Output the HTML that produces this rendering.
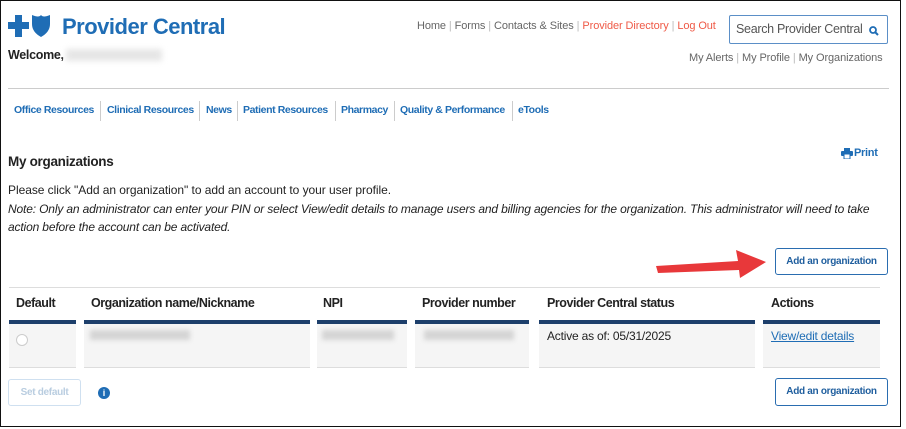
<!DOCTYPE html>
<html><head><meta charset="utf-8"><style>
*{margin:0;padding:0;box-sizing:border-box}
body{width:906px;height:429px;background:#fff;font-family:"Liberation Sans",sans-serif;position:relative;overflow:hidden;color:#222}
.frame{position:absolute;left:0;top:0;width:901px;height:427px;border:1.5px solid #111}
.a{position:absolute;white-space:nowrap}
.n{color:#1f6db5;font-weight:bold;font-size:10.5px;letter-spacing:-0.4px}
.sep{position:absolute;width:1px;background:#ccc}
.gt{color:#666;font-size:11px;letter-spacing:-0.1px}
.th{font-weight:bold;font-size:12.5px;letter-spacing:-0.45px;color:#222}
.btn{position:absolute;border:1px solid #2a6db0;border-radius:3px;color:#1f5e9e;font-weight:bold;font-size:10px;text-align:center;letter-spacing:-0.3px;background:#fff}
.blur{position:absolute;height:10px;background:#d4d4d4;filter:blur(2.5px)}
</style></head><body>
<div class="frame"></div>
<svg class="a" style="left:8px;top:14px" width="44" height="24" viewBox="0 0 44 24">
<path d="M7 1h7v7h7v7h-7v8H7v-8H0V8h7z" fill="#1f6db5"/>
<path d="M24 1q7 3 9 0q2 3 9 0v9q0 8-9 13q-9-5-9-13z" fill="#1f6db5"/>
</svg>
<div class="a" style="left:62px;top:14px;font-size:22px;font-weight:bold;color:#1f6db5;letter-spacing:-0.5px">Provider Central</div>
<div class="a" style="left:8px;top:48px;font-size:12.5px;font-weight:bold;letter-spacing:-0.3px">Welcome,</div>
<div class="a" style="left:66px;top:49px;width:96px;height:12px;background:#e6e6e6;filter:blur(3px)"></div>
<div class="a gt" style="left:417px;top:20px">Home <span style="color:#bbb">|</span> Forms <span style="color:#bbb">|</span> Contacts &amp; Sites <span style="color:#bbb">|</span> <span style="color:#ef5a47">Provider Directory</span> <span style="color:#bbb">|</span> <span style="color:#ef5a47">Log Out</span></div>
<div class="a" style="left:729px;top:15px;width:159px;height:29px;border:1px solid #5b8fc7;border-radius:2px"></div>
<div class="a" style="left:736px;top:22px;font-size:12.5px;color:#555;letter-spacing:-0.3px">Search Provider Central</div>
<svg class="a" style="left:869px;top:26px" width="10" height="10" viewBox="0 0 10 10"><circle cx="4" cy="4" r="3" fill="none" stroke="#1f6db5" stroke-width="1.8"/><path d="M6 6l3 3" stroke="#1f6db5" stroke-width="2"/></svg>
<div class="a gt" style="left:689px;top:52px">My Alerts <span style="color:#bbb">|</span> My Profile <span style="color:#bbb">|</span> My Organizations</div>
<div class="a" style="left:8px;top:88px;width:881px;height:1px;background:#ccc"></div>
<div class="a n" style="left:14px;top:104px">Office Resources</div>
<div class="sep" style="left:100px;top:101px;height:20px"></div>
<div class="a n" style="left:107px;top:104px">Clinical Resources</div>
<div class="sep" style="left:199px;top:101px;height:20px"></div>
<div class="a n" style="left:206px;top:104px">News</div>
<div class="sep" style="left:237px;top:101px;height:20px"></div>
<div class="a n" style="left:243px;top:104px">Patient Resources</div>
<div class="sep" style="left:335px;top:101px;height:20px"></div>
<div class="a n" style="left:341px;top:104px">Pharmacy</div>
<div class="sep" style="left:394px;top:101px;height:20px"></div>
<div class="a n" style="left:400px;top:104px">Quality &amp; Performance</div>
<div class="sep" style="left:512px;top:101px;height:20px"></div>
<div class="a n" style="left:518px;top:104px">eTools</div>
<div class="a" style="left:8px;top:154px;font-size:13.5px;font-weight:bold;letter-spacing:-0.3px">My organizations</div>
<svg class="a" style="left:841px;top:148px" width="12" height="11" viewBox="0 0 12 11"><rect x="3" y="0" width="6" height="3" fill="#1f6db5"/><rect x="0" y="3" width="12" height="5" rx="1" fill="#1f6db5"/><rect x="3" y="6" width="6" height="5" fill="#fff" stroke="#1f6db5" stroke-width="1"/></svg>
<div class="a" style="left:854px;top:147px;font-size:11px;font-weight:bold;color:#1f6db5;letter-spacing:-0.3px">Print</div>
<div class="a" style="left:8px;top:183px;font-size:12px;letter-spacing:-0.05px">Please click "Add an organization" to add an account to your user profile.</div>
<div class="a" style="left:8px;top:202px;font-size:12px;font-style:italic;letter-spacing:-0.15px">Note: Only an administrator can enter your PIN or select View/edit details to manage users and billing agencies for the organization. This administrator will need to take</div>
<div class="a" style="left:8px;top:220px;font-size:12px;font-style:italic;letter-spacing:-0.15px">action before the account can be activated.</div>
<svg class="a" style="left:652px;top:248px" width="118" height="34" viewBox="0 0 118 34"><path d="M4 18L86 13L84 2L114 14L88 30L87 22L6 25z" fill="#e8383a"/></svg>
<div class="btn" style="left:775px;top:248px;width:113px;height:27px;line-height:25px">Add an organization</div>
<div class="a" style="left:9px;top:287px;width:871px;height:1px;background:#ddd"></div>
<div class="a th" style="left:16px;top:296px">Default</div>
<div class="a th" style="left:91px;top:296px">Organization name/Nickname</div>
<div class="a th" style="left:323px;top:296px">NPI</div>
<div class="a th" style="left:422px;top:296px">Provider number</div>
<div class="a th" style="left:547px;top:296px">Provider Central status</div>
<div class="a th" style="left:771px;top:296px">Actions</div>
<div class="a" style="left:9px;top:320px;width:67px;height:48px;background:#f5f5f5;border-top:4px solid #1d3f6b;border-bottom:1px solid #ddd"></div>
<div class="a" style="left:84px;top:320px;width:226px;height:48px;background:#f5f5f5;border-top:4px solid #1d3f6b;border-bottom:1px solid #ddd"></div>
<div class="a" style="left:317px;top:320px;width:90px;height:48px;background:#f5f5f5;border-top:4px solid #1d3f6b;border-bottom:1px solid #ddd"></div>
<div class="a" style="left:415px;top:320px;width:114px;height:48px;background:#f5f5f5;border-top:4px solid #1d3f6b;border-bottom:1px solid #ddd"></div>
<div class="a" style="left:539px;top:320px;width:216px;height:48px;background:#f5f5f5;border-top:4px solid #1d3f6b;border-bottom:1px solid #ddd"></div>
<div class="a" style="left:763px;top:320px;width:117px;height:48px;background:#f5f5f5;border-top:4px solid #1d3f6b;border-bottom:1px solid #ddd"></div>
<div class="a" style="left:16px;top:334px;width:12px;height:12px;border:1px solid #ccc;border-radius:50%;background:#fff"></div>
<div class="blur" style="left:90px;top:330px;width:100px"></div>
<div class="blur" style="left:322px;top:330px;width:72px"></div>
<div class="blur" style="left:424px;top:330px;width:90px"></div>
<div class="a" style="left:547px;top:329px;font-size:12px;letter-spacing:-0.2px">Active as of: 05/31/2025</div>
<div class="a" style="left:771px;top:329px;font-size:12px;color:#1f6db5;text-decoration:underline;letter-spacing:-0.2px">View/edit details</div>
<div class="btn" style="left:8px;top:379px;width:73px;height:27px;line-height:25px;border-color:#cfe0f0;color:#b9cde0">Set default</div>
<div class="a" style="left:98px;top:387px;width:12px;height:12px;border-radius:50%;background:#1f6db5;color:#fff;font-size:9px;font-weight:bold;text-align:center;line-height:12px">i</div>
<div class="btn" style="left:775px;top:378px;width:113px;height:28px;line-height:26px">Add an organization</div>
</body></html>
